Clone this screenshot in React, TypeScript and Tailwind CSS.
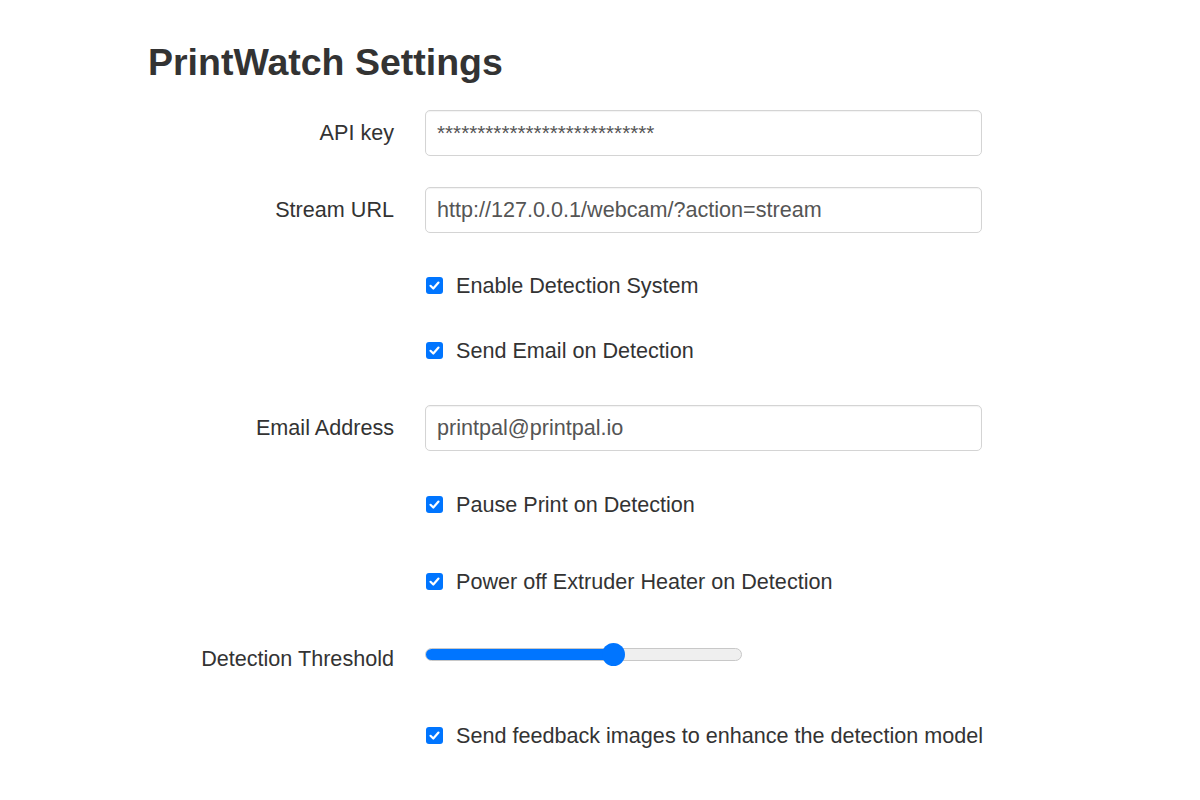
import React from "react";

function Check() {
  return (
    <span className="flex h-[17px] w-[17px] shrink-0 items-center justify-center rounded-[3px] bg-[#0075ff]">
      <svg width="13" height="13" viewBox="0 0 13 13" fill="none">
        <path d="M2.5 6.8 L5.3 9.5 L10.5 3.6" stroke="white" strokeWidth="2.2" strokeLinecap="round" strokeLinejoin="round" />
      </svg>
    </span>
  );
}

function Row({ label, children, mt, labelPad }: { label?: string; children: React.ReactNode; mt: string; labelPad?: string }) {
  return (
    <div className={`flex h-[46px] items-center ${mt}`}>
      <div className={`w-[246px] shrink-0 whitespace-nowrap text-right text-[21.6px] text-[#333] ${labelPad ?? ""}`}>{label}</div>
      <div className="ml-[31px] flex w-[557px] shrink-0 items-center">{children}</div>
    </div>
  );
}

function TextInput({ value, stars }: { value: string; stars?: boolean }) {
  return (
    <div className="flex h-[46px] w-full items-center rounded-[5px] border border-[#d4d4d4] bg-white px-[11px] shadow-[inset_0_1px_1px_rgba(0,0,0,0.05)]">
      <span className={stars ? "text-[20.7px] text-[#555]" : "text-[21.6px] text-[#555]"}>{value}</span>
    </div>
  );
}

function CheckRow({ label, mt }: { label: string; mt: string }) {
  return (
    <Row mt={mt}>
      <div className="flex items-center gap-[13px] whitespace-nowrap pl-[1px]">
        <Check />
        <span className="whitespace-nowrap text-[21.6px] text-[#333]">{label}</span>
      </div>
    </Row>
  );
}

export default function App() {
  return (
    <div className="h-[800px] w-[1200px] bg-white" style={{ fontFamily: '"Liberation Sans", Arial, sans-serif' }}>
      <div className="pl-[148px] pt-[40px]">
        <h1 className="text-[37.5px] font-bold leading-[44px] text-[#333]">PrintWatch Settings</h1>
        <Row label="API key" mt="mt-[26px]">
          <TextInput value="***************************" stars />
        </Row>
        <Row label="Stream URL" mt="mt-[31px]">
          <TextInput value="http://127.0.0.1/webcam/?action=stream" />
        </Row>
        <CheckRow label="Enable Detection System" mt="mt-[30px]" />
        <CheckRow label="Send Email on Detection" mt="mt-[19px]" />
        <Row label="Email Address" mt="mt-[31px]">
          <TextInput value="printpal@printpal.io" />
        </Row>
        <CheckRow label="Pause Print on Detection" mt="mt-[31px]" />
        <CheckRow label="Power off Extruder Heater on Detection" mt="mt-[31px]" />
        <Row label="Detection Threshold" mt="mt-[26px]" labelPad="pt-[10px]">
          <div className="relative h-[13px] w-[317px] rounded-full border border-[#c8c8c8] bg-[#efefef]">
            <div className="h-full w-[190px] rounded-full bg-[#0075ff]" />
            <div className="absolute left-[176px] top-[-6px] h-[23px] w-[23px] rounded-full bg-[#0075ff]" />
          </div>
        </Row>
        <CheckRow label="Send feedback images to enhance the detection model" mt="mt-[36px]" />
      </div>
    </div>
  );
}
